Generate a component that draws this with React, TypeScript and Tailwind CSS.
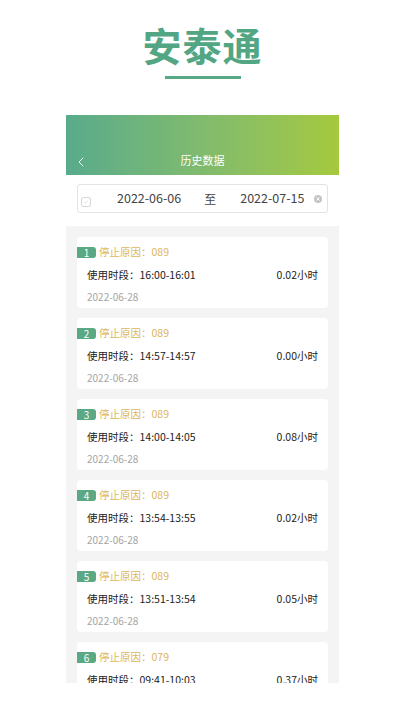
import { ChevronLeft } from "lucide-react";

type Record = {
  reason: string;
  range: string;
  hours: string;
  date: string;
};

const records: Record[] = [
  { reason: "089", range: "16:00-16:01", hours: "0.02", date: "2022-06-28" },
  { reason: "089", range: "14:57-14:57", hours: "0.00", date: "2022-06-28" },
  { reason: "089", range: "14:00-14:05", hours: "0.08", date: "2022-06-28" },
  { reason: "089", range: "13:54-13:55", hours: "0.02", date: "2022-06-28" },
  { reason: "089", range: "13:51-13:54", hours: "0.05", date: "2022-06-28" },
  { reason: "079", range: "09:41-10:03", hours: "0.37", date: "2022-06-28" },
];

function RecordCard({ index, item }: { index: number; item: Record }) {
  return (
    <div className="h-[71px] bg-white rounded-[4px] pt-[9px] flex flex-col whitespace-nowrap">
      <div className="flex items-center h-[12px]">
        <span className="w-[19px] h-[11px] bg-[#5aa884] text-white text-[10px] leading-[11px] text-center rounded-r-[3px]">
          {index}
        </span>
        <span className="ml-[3px] text-[10.5px] text-[#ddb65a] leading-none">
          停止原因：{item.reason}
        </span>
      </div>
      <div className="flex items-center justify-between px-[10px] mt-[12px] text-[10.5px] text-[#222] leading-none">
        <span>使用时段：{item.range}</span>
        <span>{item.hours}小时</span>
      </div>
      <div className="pl-[10px] mt-[11px] text-[10px] text-[#a5a5a5] leading-none">
        {item.date}
      </div>
    </div>
  );
}

export default function App() {
  return (
    <div
      className="w-full h-[720px] bg-white overflow-hidden"
      style={{ fontFamily: '"Noto Sans CJK SC", "Noto Sans", sans-serif' }}
    >
      <h1 className="pt-[23px] text-center text-[39px] font-bold leading-[42px] text-[#52a683] tracking-[1px]">
        安泰通
      </h1>
      <div className="mx-auto mt-[11px] w-[76px] h-[3px] bg-[#58aa86]" />

      <div className="ml-[66px] mt-[36px] w-[273px] h-[568px] overflow-hidden bg-[#f4f4f4]">
        <div className="h-[60px] bg-linear-to-r from-[#58ab8b] to-[#a5c93b] relative flex items-end pb-[7px]">
          <ChevronLeft className="absolute left-[7px] bottom-[5px] w-[16px] h-[16px] text-white" strokeWidth={1.4} />
          <div className="w-full text-center text-white text-[11px] leading-[16px]">历史数据</div>
        </div>

        <div className="bg-white h-[51px] px-[11px] pt-[9px]">
          <div className="h-[29px] border border-[#e3e3e3] rounded-[3px] flex items-center pl-[3px] pr-[5px] text-[12.5px] text-[#444] whitespace-nowrap">
            <span className="mt-[6px] w-[10px] h-[10px] border border-[#d8d8d8] rounded-[2px] flex items-center justify-center">
              <svg viewBox="0 0 10 10" className="w-[6px] h-[6px]">
                <path d="M2 5 L4 7 L8 3" stroke="#cfcfcf" strokeWidth="1.2" fill="none" />
              </svg>
            </span>
            <span className="ml-[26px]">2022-06-06</span>
            <span className="ml-[23px] text-[12px]">至</span>
            <span className="ml-[24px]">2022-07-15</span>
            <span className="ml-auto w-[8px] h-[8px] rounded-full bg-[#c5c5c5] flex items-center justify-center">
              <svg viewBox="0 0 8 8" className="w-[6px] h-[6px]">
                <path d="M2 2 L6 6 M6 2 L2 6" stroke="#fff" strokeWidth="1.2" />
              </svg>
            </span>
          </div>
        </div>

        <div className="px-[11px] pt-[11px] flex flex-col gap-[10px]">
          {records.map((item, i) => (
            <RecordCard key={i} index={i + 1} item={item} />
          ))}
        </div>
      </div>
    </div>
  );
}
